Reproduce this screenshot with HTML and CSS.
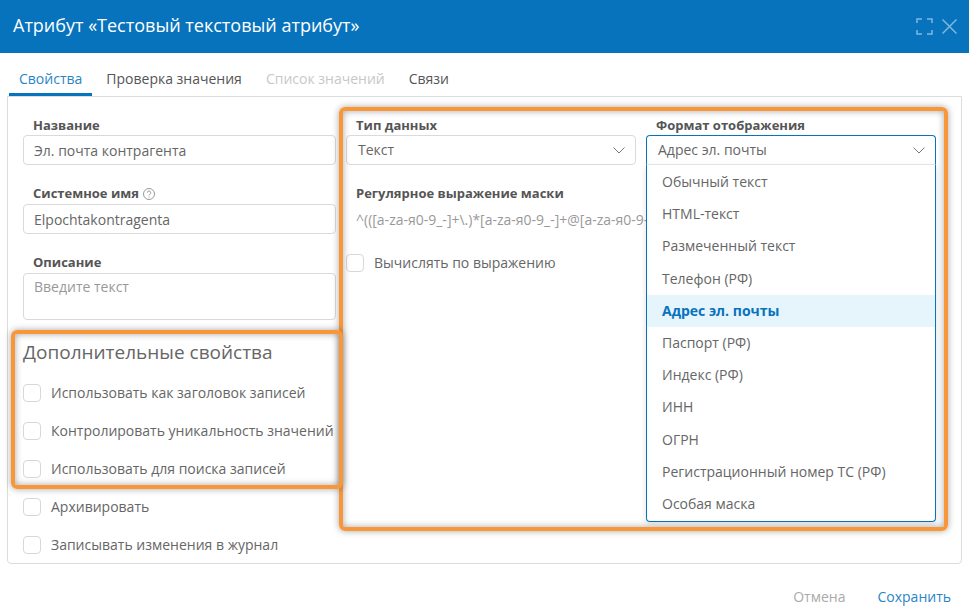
FILE: index.html
```html
<!DOCTYPE html>
<html lang="ru">
<head>
<meta charset="utf-8">
<title>Атрибут</title>
<link rel="stylesheet" href="styles.css">
</head>
<body>
<div class="dialog">
  <header class="head">
    <h1 class="title">Атрибут «Тестовый текстовый атрибут»</h1>
    <div class="win-icons">
      <svg class="win-icon" viewBox="0 0 17 17" width="17" height="17"><path d="M1 5V1h5M11 1h5v4M16 12v4h-5M6 16H1v-4"/></svg>
      <svg class="win-icon" viewBox="0 0 15 15" width="15" height="15"><path d="M0.5 0.5l14 14M14.500 0.5l-14 14"/></svg>
    </div>
  </header>
  <nav class="tabs">
    <span class="tab active">Свойства</span>
    <span class="tab">Проверка значения</span>
    <span class="tab disabled">Список значений</span>
    <span class="tab">Связи</span>
  </nav>
  <main class="panel">
    <section class="col-left">
      <div class="field">
        <div class="label">Название</div>
        <div class="input">Эл. почта контрагента</div>
      </div>
      <div class="field">
        <div class="label">Системное имя
          <svg class="help" viewBox="0 0 12 12" width="12" height="12"><circle cx="6" cy="6" r="5.500"/><path d="M4.300 4.700a1.700 1.700 0 1 1 2.500 1.500c-.6.3-.8.6-.8 1.200"/><path d="M6 8.600v.9"/></svg>
        </div>
        <div class="input">Elpochtakontragenta</div>
      </div>
      <div class="field">
        <div class="label">Описание</div>
        <div class="input area">Введите текст</div>
      </div>
      <h2 class="section-title">Дополнительные свойства</h2>
      <div class="checks">
        <label class="check"><span class="box"></span>Использовать как заголовок записей</label>
        <label class="check"><span class="box"></span>Контролировать уникальность значений</label>
        <label class="check"><span class="box"></span>Использовать для поиска записей</label>
        <label class="check"><span class="box"></span>Архивировать</label>
        <label class="check"><span class="box"></span>Записывать изменения в журнал</label>
      </div>
    </section>
    <section class="col-right">
      <div class="row-two">
        <div class="field-top">
          <div class="label">Тип данных</div>
          <div class="select">Текст
            <svg class="chevron" viewBox="0 0 12 7" width="12" height="7"><path d="M0.500 0.500L6 6l5.500-5.500"/></svg>
          </div>
        </div>
        <div class="field-top">
          <div class="label">Формат отображения</div>
          <div class="select-wrap">
            <div class="select open">Адрес эл. почты
              <svg class="chevron" viewBox="0 0 12 7" width="12" height="7"><path d="M0.500 0.500L6 6l5.500-5.500"/></svg>
            </div>
            <ul class="dropdown">
              <li>Обычный текст</li>
              <li>HTML-текст</li>
              <li>Размеченный текст</li>
              <li>Телефон (РФ)</li>
              <li class="current">Адрес эл. почты</li>
              <li>Паспорт (РФ)</li>
              <li>Индекс (РФ)</li>
              <li>ИНН</li>
              <li>ОГРН</li>
              <li>Регистрационный номер ТС (РФ)</li>
              <li>Особая маска</li>
            </ul>
          </div>
        </div>
      </div>
      <div class="field">
        <div class="label">Регулярное выражение маски</div>
        <div class="regex">^(([a-zа-я0-9_-]+\.)*[a-zа-я0-9_-]+@[a-zа-я0-9-]+(\.[a-zа-я0-9-]+)*\.[a-zа-я]{2,6})$</div>
      </div>
      <label class="check calc"><span class="box"></span>Вычислять по выражению</label>
    </section>
    <div class="mark mark-right"></div>
    <div class="mark mark-left"></div>
  </main>
  <footer class="foot">
    <span class="btn cancel">Отмена</span>
    <span class="btn save">Сохранить</span>
  </footer>
</div>
</body>
</html>
```
FILE: styles.css
```css
* { box-sizing: border-box; }
html, body { margin: 0; padding: 0; }
body {
  width: 969px;
  height: 616px;
  overflow: hidden;
  background: #fff;
  font-family: "Open Sans", "Noto Sans", sans-serif;
  font-size: 14px;
  color: #666;
}
.dialog { display: flex; flex-direction: column; height: 616px; }
.head {
  height: 53px;
  flex: none;
  background: #0673bc;
  display: flex;
  align-items: center;
  justify-content: space-between;
  padding: 0 12px 0 13px;
}
.title { margin: 0 0 3px; font-size: 18px; font-weight: 500; color: #fff; line-height: 24px; }
.win-icons { display: flex; align-items: center; gap: 9px; }
.win-icon { fill: none; stroke: #7fb8df; stroke-width: 1.5; }
.tabs {
  height: 43px;
  flex: none;
  display: flex;
  gap: 4px;
  padding-left: 9px;
  align-items: flex-end;
  position: relative;
}
.tab {
  padding: 0 10px;
  height: 43px;
  line-height: 52px;
  color: #555;
  white-space: nowrap;
}
.tab.active { color: #2a85c6; border-bottom: 3px solid #0673bc; position: relative; z-index: 1; }
.tab.disabled { color: #c8c8c8; }
.panel {
  position: relative;
  margin: 0 7px 0 7px;
  height: 468px;
  flex: none;
  border: 1px solid #dcdcdc;
  border-radius: 0 0 4px 4px;
  padding: 19px 15px 0;
  display: grid;
  grid-template-columns: 313px 590px;
  column-gap: 10px;
  align-items: start;
}
.label {
  height: 19px;
  line-height: 19px;
  padding-left: 10px;
  font-size: 13px;
  font-weight: 700;
  color: #555;
  display: flex;
  align-items: center;
  gap: 4px;
}
.field + .field { margin-top: 19px; }
.field + .field .input { margin-top: 1px; }
.input, .select {
  height: 30px;
  border: 1px solid #dadada;
  border-radius: 4px;
  padding: 0 10px;
  line-height: 28px;
  color: #666;
  background: #fff;
}
.input { line-height: 30px; }
.input.area { height: 47px; line-height: 26px; color: #999; }
.help { fill: none; stroke: #999; stroke-width: 1; }
.section-title {
  margin: 20px 0 20px;
  font-size: 19px;
  line-height: 24px;
  font-weight: 400;
  color: #666;
}
.checks { display: flex; flex-direction: column; gap: 20px; }
.check {
  display: flex;
  align-items: center;
  gap: 10px;
  height: 18px;
  line-height: 18px;
  color: #666;
  white-space: nowrap;
}
.box {
  width: 18px;
  height: 18px;
  flex: none;
  border: 1px solid #d8d8d8;
  border-radius: 4px;
  background: #fff;
}
.col-right { position: relative; min-width: 0; }
.row-two { display: grid; grid-template-columns: 290px 290px; column-gap: 10px; margin-bottom: 19px; }
.select { position: relative; padding: 0 11px; }
.chevron { position: absolute; right: 10px; top: 11px; fill: none; stroke: #777; stroke-width: 1; }
.select-wrap { position: relative; z-index: 2; }
.select.open {
  border-color: #0673bc;
  border-bottom-color: #eaeaea;
  border-radius: 4px 4px 0 0;
}
.dropdown {
  position: absolute;
  left: 0;
  right: 0;
  top: 30px;
  margin: 0;
  padding: 0;
  list-style: none;
  background: #fff;
  border: 1px solid #0673bc;
  border-top: 0;
  border-radius: 0 0 4px 4px;
  height: 357px;
  padding-top: 1px;
  box-shadow: 0 2px 6px rgba(0,0,0,.12);
}
.dropdown li {
  height: 32.200px;
  line-height: 32px;
  padding-left: 15px;
  white-space: nowrap;
}
.dropdown li.current { background: #e6f4fc; color: #0673bc; font-weight: 700; }
.regex {
  width: 300px;
  height: 31px;
  line-height: 34px;
  padding-left: 10px;
  font-size: 14px;
  color: #999;
  white-space: nowrap;
  overflow: hidden;
}
.calc { margin-top: 20px; }
.mark {
  position: absolute;
  border: 4px solid #f7973a;
  border-radius: 6px;
  box-shadow: 0 0 7px rgba(0,0,0,.35), inset 0 0 7px rgba(0,0,0,.35);
  pointer-events: none;
  z-index: 3;
}
.mark-right { left: 331px; top: 10px; width: 609px; height: 424px; }
.mark-left { left: 3px; top: 233px; width: 332px; height: 159px; z-index: 4; }
.foot {
  flex: 1;
  display: flex;
  justify-content: flex-end;
  align-items: center;
  gap: 32px;
  padding: 13px 18px 0 0;
}
.cancel { color: #aaa; }
.save { color: #2a85c6; }
```
